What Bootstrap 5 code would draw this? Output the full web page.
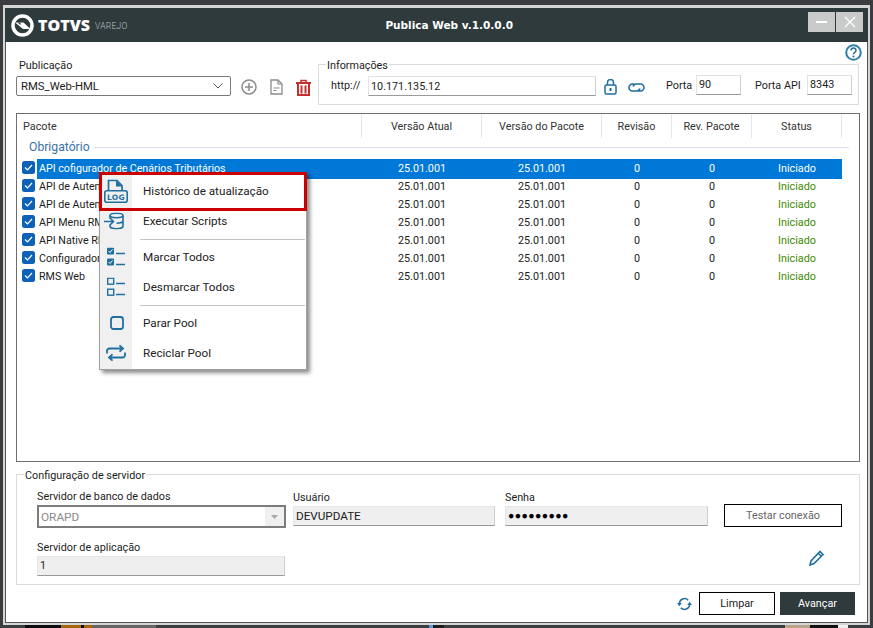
<!DOCTYPE html>
<html lang="pt-BR">
<head>
<meta charset="utf-8">
<title>Publica Web</title>
<link rel="stylesheet" href="https://cdn.jsdelivr.net/npm/bootstrap@5.3.0/dist/css/bootstrap.min.css">
<style>
html{height:100%;overflow:hidden;background:#3a3d40}
body{height:100%;margin:0;overflow:hidden;font-family:Roboto,"Liberation Sans",sans-serif;font-size:10.8px;line-height:18px;color:#1c1c1c;
background:linear-gradient(90deg,#3c3f42 25px,#0d0d10 25px,#0d0d10 61px,#a8670c 61px,#a8670c 81px,#0d0d10 81px,#0d0d10 84px,#a8670c 84px,#a8670c 92px,#666 92px,#666 156px,#3c3f42 156px,#3c3f42 429px,#5a98e0 429px,#5a98e0 433px,#1c1c20 433px,#1c1c20 444px,#3c3f42 444px,#3c3f42 785px,#b8a488 785px,#b8a488 810px,#111 810px,#111 838px,#eee 838px,#eee 848px,#3c3f42 848px) 0 100%/100% 3px no-repeat,#3a3d40}
.shell{position:relative;width:867px;height:620px;margin:5px 0 0 3px;background:#fff;border:2px solid #d4d6d6;border-top-width:3px}
.titlebar{height:34px;background:#2e3a3c;color:#fff;padding:0 5px 0 6px}
.logo-name{font-family:"Open Sans",sans-serif;font-weight:800;font-size:16px;margin-left:4px}
.logo-sub{font-size:8.5px;letter-spacing:.25px;color:#b9c0c1;margin-left:5px;margin-top:2px;font-weight:300}
.app-title{font-family:"DejaVu Sans",sans-serif;font-weight:700;font-size:10.5px;margin-left:258px}
.winbtn{width:27px;height:20px;background:#c9cbcb;margin-left:1px}
.winbtns{margin-top:4px}
.client{height:581px;border:1px solid #555;border-top:0}
.help-line{height:15px;padding-right:5px}
.help-ic{margin-top:2px}
.top-area{padding:0 0 0 10px;height:56px}
.pub-col{width:215px}
.pub-label{padding-left:3px;height:19px}
.pub-select{height:20px;border:1px solid #7a7a7a;border-radius:2px;padding:2px 7px 0 4px;font-size:11.3px}
.pub-select svg{margin-top:-2px}
.tool-row{margin:22px 7px 0 10px;gap:13px;height:17px}
.groupbox{border:1px solid #dcdcdc;position:relative}
.group-title{position:absolute;top:-8px;left:7px;background:#fff;padding:0 1px;white-space:nowrap}
.info-box{height:41px;width:541px;margin-top:7px;padding:11px 0 0 12px;white-space:nowrap}
.flat-input{background:#fff;border:1px solid #e3e3e3;border-bottom:1px solid #9a9a9a;border-right-color:#cfcfcf;height:20px;padding:0 2px}
.txt-http{width:37px;margin-top:1px}
.url-input{width:228px;padding-top:1px;font-size:10.8px}
.lock-ic{margin:3px 0 0 8px}
.link-ic{margin:7px 0 0 11px}
.txt-porta{margin:1px 0 0 21px;width:30px}
.port-input{width:45px;margin-top:-1px}
.txt-api{margin:1px 0 0 14px;width:52px}
.api-input{width:45px;margin-top:-1px}
.grid-box{height:349px;margin:0 0 0 10px;width:844px;border:1px solid #6e6e6e;position:relative}
.grid-head{height:24px;display:grid;grid-template-columns:345px 120px 120px 70px 80px 90px;color:#333;line-height:16px}
.grid-head>div{border-right:1px solid #e4e6f0;text-align:center;padding-top:5px}
.grid-head>div:first-child{text-align:left;padding-left:6px}
.grp-head{height:21px;color:#3b72a8;padding:1px 10px 0 12px;font-size:12.2px;line-height:16px}
.grp-rule{height:1px;background:#dfe3ee;margin:8px 0 0 4px}
.data-row{height:18px;display:grid;grid-template-columns:20px 325px 120px 120px 70px 80px 90px;width:825px;line-height:20px}
.data-row>div{text-align:center}
.data-row>.nm{text-align:left;padding-left:2px;white-space:nowrap;overflow:hidden;font-size:10.7px}
.data-row>.chk{padding:2px 0 0 5px;text-align:left;background:#fff;line-height:0}
.data-row.sel>div:not(.chk){background:#0078d7;color:#fff}
.st-ok{color:#3d8a00}
.data-row.sel .st-ok{color:#dff0d0}
.ctx{position:absolute;left:94px;top:164px;width:208px;height:198px;background:#fff;border:1px solid #a0a0a0;box-shadow:3px 3px 4px rgba(0,0,0,.45);padding-top:3px;font-size:11.7px;line-height:16px;color:#222}
.ctx::before{content:"";position:absolute;left:0;top:0;bottom:0;width:32px;background:#f0f0f0}
.ctx-item{height:30px;display:flex;align-items:center;position:relative;padding-left:43px}
.ctx-ic{position:absolute;top:50%;transform:translateY(-50%)}
.ci-log{left:4px}.ci-exe{left:4px}.ci-chk{left:7px}.ci-stop{left:10px}.ci-rec{left:6px}
.ctx-sep{height:1px;background:#c4c4c4;margin:3px 1px 2px 40px;position:relative}
.ctx-hl{position:absolute;left:-1px;top:-1px;width:208px;height:39px;border:3px solid #cc0000;pointer-events:none}
.log-word{font-family:"DejaVu Sans",sans-serif;font-weight:700;font-size:7.5px;fill:#1f6f9f;letter-spacing:.3px}
.srv-box{height:111px;width:844px;margin:12px 0 0 10px;padding-left:20px}
.srv-col1{width:250px}
.srv-lbl{height:16px;margin-top:13px}
.combo{height:23px;width:249px;border:2px solid #7c7c7c;margin-top:1px;color:#8a8a8a;background:#fff;padding:2px 0 0 2px;font-size:11.8px;line-height:16px}
.combo-btn{width:19px;height:19px;background:#f0f0f0;margin-top:-2px}
.gray-input{background:#efefef;border:1px solid #e6e6e6;border-bottom:1px solid #9a9a9a;border-right-color:#cfcfcf;height:20px;padding:1px 2px 0;line-height:16px}
.val-caps{font-size:11.7px}
.col-user{width:202px;margin-left:6px}
.col-pass{width:203px;margin-left:10px}
.col-btn{width:118px;margin:29px 0 0 16px}
.user-lbl{margin-top:14px;height:16px;margin-bottom:1px}
.test-btn{display:block;width:118px;height:23px;border:1px solid #000;text-align:center;color:#666;line-height:22px;background:#fff;padding:0;border-radius:0;font-size:10.8px}
.app-lbl{margin-top:11px;height:16px}
.app-input{width:248px;margin-top:1px}
.pencil{margin:22px 0 0 524px}
.foot{padding-right:12px;margin-top:7px}
.foot-btn{width:76px;height:23px;border:1px solid #000;border-radius:0;background:#fff;color:#222;font-size:10.8px;padding:0;line-height:21px}
.foot-dark{width:75px;background:#2e3a3c;color:#fff;border-color:#2e3a3c;margin-left:5px}
.foot-ic{margin-right:7px}
.pw{letter-spacing:.4px;color:#000;font-size:10.5px}
</style>
</head>
<body>
<div class="shell">
  <div class="titlebar d-flex align-items-center">
    <svg width="23" height="23" viewBox="0 0 23 23"><circle cx="11.500" cy="11.500" r="9.500" fill="none" stroke="#fff" stroke-width="3.500"/><path d="M4 8.500h8.500l7 6.500H12z" fill="#fff"/><path d="M6.500 8.500h3v2.500z" fill="#2e3a3c"/></svg>
    <span class="logo-name">TOTVS</span>
    <span class="logo-sub">VAREJO</span>
    <span class="app-title">Publica Web v.1.0.0.0</span>
    <div class="ms-auto d-flex align-self-start winbtns">
      <div class="winbtn d-flex align-items-center justify-content-center"><svg width="12" height="2"><rect width="11" height="2" fill="#fff"/></svg></div>
      <div class="winbtn d-flex align-items-center justify-content-center"><svg width="12" height="12" viewBox="0 0 12 12"><path d="M1 1l10 10M11 1L1 11" stroke="#fff" stroke-width="1.300"/></svg></div>
    </div>
  </div>

  <div class="client">
  <div class="help-line d-flex justify-content-end align-items-start">
    <svg class="help-ic" width="17" height="17" viewBox="0 0 17 17"><circle cx="8.500" cy="8.500" r="7.300" fill="none" stroke="#2f7fa8" stroke-width="2"/><path d="M6 6.500c0-3.200 5-3.200 5 0 0 2-2.500 1.800-2.500 3.800" fill="none" stroke="#2f6f90" stroke-width="1.500"/><circle cx="8.500" cy="12.500" r="1" fill="#2f6f90"/></svg>
  </div>

  <div class="top-area d-flex">
    <div class="pub-col">
      <div class="pub-label">Publicação</div>
      <div class="pub-select d-flex justify-content-between align-items-center"><span>RMS_Web-HML</span>
        <svg width="10" height="6" viewBox="0 0 10 6"><path d="M.5.500l4.500 4.500 4.500-4.500" fill="none" stroke="#555"/></svg></div>
    </div>
    <div class="d-flex tool-row">
      <svg width="16" height="16" viewBox="0 0 16 16"><circle cx="8" cy="8" r="7" fill="none" stroke="#8a8a8a" stroke-width="1.500"/><path d="M8 4v8M4 8h8" stroke="#8a8a8a" stroke-width="1.500"/></svg>
      <svg width="13" height="16" viewBox="0 0 13 16"><path d="M1 1h7l4 4v10H1z" fill="none" stroke="#8a8a8a" stroke-width="1.300"/><path d="M3.500 9h6M3.500 11.500h3M8 1v4h4" fill="none" stroke="#8a8a8a" stroke-width="1.200"/></svg>
      <svg width="15" height="17" viewBox="0 0 15 17"><path d="M0 4h15" stroke="#c5302c" stroke-width="2"/><path d="M5 3.500V1.500h5v2" fill="none" stroke="#c5302c" stroke-width="1.500"/><path d="M2 5v11h11V5" fill="none" stroke="#c5302c" stroke-width="2"/><path d="M5.500 6.500v8M9.500 6.500v8" stroke="#c5302c" stroke-width="2"/></svg>
    </div>
    <div class="groupbox info-box d-flex">
      <span class="group-title">Informações</span>
      <span class="txt-http">http://</span>
      <div class="flat-input url-input">10.171.135.12</div>
      <svg class="lock-ic" width="13" height="16" viewBox="0 0 13 16"><rect x="1" y="6" width="11" height="9" rx="1.500" fill="none" stroke="#1f6f9f" stroke-width="1.500"/><path d="M3.500 6V3.500a3 3 0 0 1 6 0V6" fill="none" stroke="#1f6f9f" stroke-width="1.500"/><rect x="5.500" y="9" width="2" height="3" fill="#1f6f9f"/></svg>
      <svg class="link-ic" width="17" height="9" viewBox="0 0 17 9"><path d="M6 1H4.500a3.500 3.500 0 0 0 0 7H9a3 3 0 0 0 2.800-2.500M11 8h1.500a3.500 3.500 0 0 0 0-7H8a3 3 0 0 0-2.800 2.500" fill="none" stroke="#1f6f9f" stroke-width="1.600"/></svg>
      <span class="txt-porta">Porta</span>
      <div class="flat-input port-input">90</div>
      <span class="txt-api">Porta API</span>
      <div class="flat-input api-input">8343</div>
    </div>
  </div>

  <div class="grid-box">
    <div class="grid-head">
      <div>Pacote</div><div>Versão Atual</div><div>Versão do Pacote</div><div>Revisão</div><div>Rev. Pacote</div><div>Status</div>
    </div>
    <div class="grp-head d-flex align-items-start"><span>Obrigatório</span><div class="grp-rule flex-grow-1"></div></div>
    <div class="data-row sel">
      <div class="chk"><svg width="13" height="13" viewBox="0 0 13 13"><rect width="13" height="13" rx="2.500" fill="#0d62b8"/><path d="M3 6.500l2.500 2.500 4.500-5" fill="none" stroke="#fff" stroke-width="1.200"/></svg></div>
      <div class="nm">API cofigurador de Cenários Tributários</div><div>25.01.001</div><div>25.01.001</div><div>0</div><div>0</div><div class="st-ok">Iniciado</div>
    </div>
    <div class="data-row">
      <div class="chk"><svg width="13" height="13" viewBox="0 0 13 13"><rect width="13" height="13" rx="2.500" fill="#0d62b8"/><path d="M3 6.500l2.500 2.500 4.500-5" fill="none" stroke="#fff" stroke-width="1.200"/></svg></div>
      <div class="nm">API de Autenticação</div><div>25.01.001</div><div>25.01.001</div><div>0</div><div>0</div><div class="st-ok">Iniciado</div>
    </div>
    <div class="data-row">
      <div class="chk"><svg width="13" height="13" viewBox="0 0 13 13"><rect width="13" height="13" rx="2.500" fill="#0d62b8"/><path d="M3 6.500l2.500 2.500 4.500-5" fill="none" stroke="#fff" stroke-width="1.200"/></svg></div>
      <div class="nm">API de Autenticação</div><div>25.01.001</div><div>25.01.001</div><div>0</div><div>0</div><div class="st-ok">Iniciado</div>
    </div>
    <div class="data-row">
      <div class="chk"><svg width="13" height="13" viewBox="0 0 13 13"><rect width="13" height="13" rx="2.500" fill="#0d62b8"/><path d="M3 6.500l2.500 2.500 4.500-5" fill="none" stroke="#fff" stroke-width="1.200"/></svg></div>
      <div class="nm">API Menu RMS</div><div>25.01.001</div><div>25.01.001</div><div>0</div><div>0</div><div class="st-ok">Iniciado</div>
    </div>
    <div class="data-row">
      <div class="chk"><svg width="13" height="13" viewBox="0 0 13 13"><rect width="13" height="13" rx="2.500" fill="#0d62b8"/><path d="M3 6.500l2.500 2.500 4.500-5" fill="none" stroke="#fff" stroke-width="1.200"/></svg></div>
      <div class="nm">API Native RMS</div><div>25.01.001</div><div>25.01.001</div><div>0</div><div>0</div><div class="st-ok">Iniciado</div>
    </div>
    <div class="data-row">
      <div class="chk"><svg width="13" height="13" viewBox="0 0 13 13"><rect width="13" height="13" rx="2.500" fill="#0d62b8"/><path d="M3 6.500l2.500 2.500 4.500-5" fill="none" stroke="#fff" stroke-width="1.200"/></svg></div>
      <div class="nm">Configurador</div><div>25.01.001</div><div>25.01.001</div><div>0</div><div>0</div><div class="st-ok">Iniciado</div>
    </div>
    <div class="data-row">
      <div class="chk"><svg width="13" height="13" viewBox="0 0 13 13"><rect width="13" height="13" rx="2.500" fill="#0d62b8"/><path d="M3 6.500l2.500 2.500 4.500-5" fill="none" stroke="#fff" stroke-width="1.200"/></svg></div>
      <div class="nm">RMS Web</div><div>25.01.001</div><div>25.01.001</div><div>0</div><div>0</div><div class="st-ok">Iniciado</div>
    </div>
  </div>

  <div class="groupbox srv-box">
    <span class="group-title">Configuração de servidor</span>
    <div class="d-flex">
      <div class="srv-col1">
        <div class="srv-lbl">Servidor de banco de dados</div>
        <div class="combo d-flex justify-content-between"><span>ORAPD</span><div class="combo-btn d-flex align-items-center justify-content-center"><svg width="7" height="4"><path d="M0 0h7L3.500 4z" fill="#a8a8a8"/></svg></div></div>
      </div>
      <div class="col-user">
        <div class="user-lbl">Usuário</div>
        <div class="gray-input val-caps">DEVUPDATE</div>
      </div>
      <div class="col-pass">
        <div class="user-lbl">Senha</div>
        <div class="gray-input pw">●●●●●●●●●</div>
      </div>
      <div class="col-btn"><button type="button" class="btn test-btn">Testar conexão</button></div>
    </div>
    <div class="d-flex align-items-start">
      <div>
        <div class="app-lbl">Servidor de aplicação</div>
        <div class="gray-input app-input">1</div>
      </div>
      <svg class="pencil" width="16" height="16" viewBox="0 0 16 16"><path d="M11 1.500l3 3-9 9L1 15l1-4zM9.500 3.500l3 3" fill="none" stroke="#1f6f9f" stroke-width="1.600"/></svg>
    </div>
  </div>

  <div class="foot d-flex justify-content-end align-items-center">
    <svg class="foot-ic" width="15" height="14" viewBox="0 0 16 15"><path d="M2.500 7a5.500 5.500 0 0 1 9.500-3.500M13.500 8A5.500 5.500 0 0 1 4 11.500" fill="none" stroke="#1f6f9f" stroke-width="1.600"/><path d="M0 6.500h5L2.500 10zM11 8.500h5L13.500 5z" fill="#1f6f9f"/></svg>
    <button type="button" class="btn foot-btn">Limpar</button>
    <button type="button" class="btn foot-btn foot-dark">Avançar</button>
  </div>
  </div>

  <div class="ctx">
    <div class="ctx-item"><svg class="ctx-ic ci-log" width="24" height="24" viewBox="0 0 24 24"><path d="M4.500 11V1.500h8.500l5 5V11" fill="none" stroke="#1f6f9f" stroke-width="1.700"/><path d="M12 1.500v6h6" fill="#1f6f9f"/><rect x=".8" y="11.800" width="22.400" height="11.400" rx="2" fill="none" stroke="#1f6f9f" stroke-width="1.600"/><text class="log-word" x="12" y="20.500" text-anchor="middle">LOG</text></svg>Histórico de atualização</div>
    <div class="ctx-item"><svg class="ctx-ic ci-exe" width="20" height="17" viewBox="0 0 20 17"><ellipse cx="12.500" cy="3" rx="6.500" ry="2.200" fill="none" stroke="#1f6f9f" stroke-width="1.600"/><path d="M6 3v3M19 3v11c0 1.200-3 2.200-6.500 2.200S6 15.200 6 14v-2M19 8.500c0 1.200-3 2.200-6.500 2.200" fill="none" stroke="#1f6f9f" stroke-width="1.600"/><path d="M0 9h9M6 5.500L9.500 9 6 12.500" fill="none" stroke="#1f6f9f" stroke-width="1.600"/></svg>Executar Scripts</div>
    <div class="ctx-sep"></div>
    <div class="ctx-item"><svg class="ctx-ic ci-chk" width="18" height="19" viewBox="0 0 18 19"><rect width="7" height="7" rx="1" fill="#1f6f9f"/><rect y="11" width="7" height="7" rx="1" fill="#1f6f9f"/><path d="M1.500 3.500L3 5l2.500-3M1.500 14.500L3 16l2.500-3" fill="none" stroke="#fff"/><path d="M9 6h9M9 17h9" stroke="#1f6f9f" stroke-width="1.500"/></svg>Marcar Todos</div>
    <div class="ctx-item"><svg class="ctx-ic ci-chk" width="18" height="19" viewBox="0 0 18 19"><rect x=".7" y=".7" width="6" height="6" fill="none" stroke="#1f6f9f" stroke-width="1.400"/><rect x=".7" y="11.700" width="6" height="6" fill="none" stroke="#1f6f9f" stroke-width="1.400"/><path d="M9 6h9M9 17h9" stroke="#1f6f9f" stroke-width="1.500"/></svg>Desmarcar Todos</div>
    <div class="ctx-sep"></div>
    <div class="ctx-item"><svg class="ctx-ic ci-stop" width="14" height="14" viewBox="0 0 14 14"><rect x="1" y="1" width="12" height="12" rx="2.500" fill="none" stroke="#1f6f9f" stroke-width="1.800"/></svg>Parar Pool</div>
    <div class="ctx-item"><svg class="ctx-ic ci-rec" width="20" height="17" viewBox="0 0 20 17"><path d="M1 9V6.500A2.500 2.500 0 0 1 3.500 4H17M13.500.8L17 4l-3.500 3.200" fill="none" stroke="#1f6f9f" stroke-width="1.800"/><path d="M19 8v2.500a2.500 2.500 0 0 1-2.500 2.500H3M6.500 9.800L3 13l3.500 3.200" fill="none" stroke="#1f6f9f" stroke-width="1.800"/></svg>Reciclar Pool</div>
    <div class="ctx-hl"></div>
  </div>
</div>
<script src="https://cdn.jsdelivr.net/npm/bootstrap@5.3.0/dist/js/bootstrap.bundle.min.js"></script>
</body>
</html>
